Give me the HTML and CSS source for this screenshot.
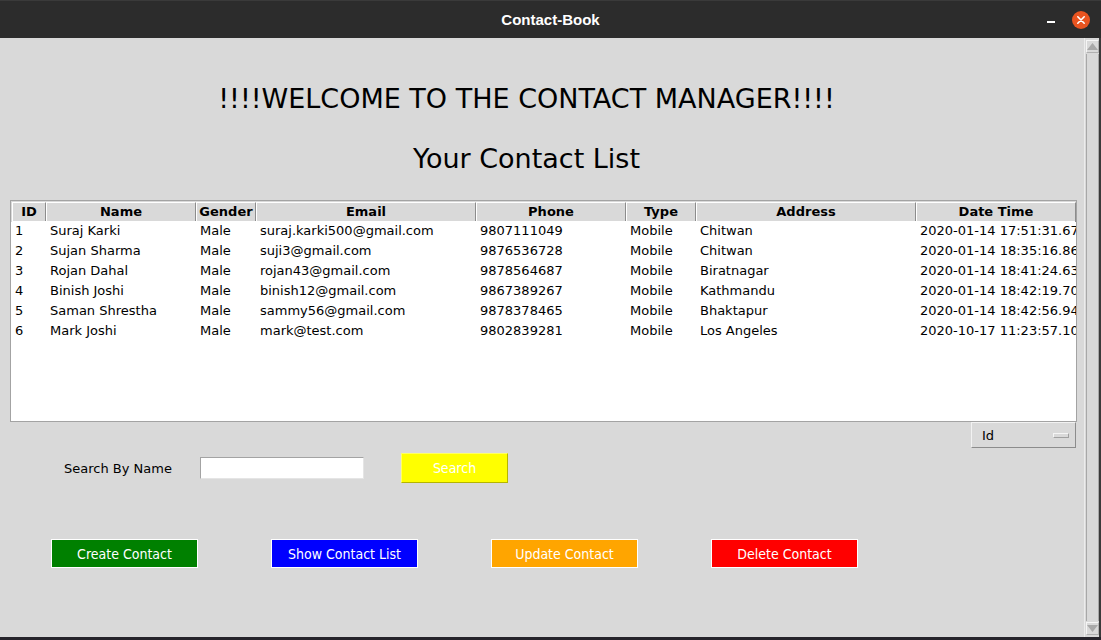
FILE: index.html
```html
<!DOCTYPE html>
<html>
<head>
<meta charset="utf-8">
<link rel="stylesheet" href="styles.css">
</head>
<body>
<div class="titlebar">
  <div class="tb-side"></div>
  <div class="tb-title">Contact-Book</div>
  <div class="tb-side tb-controls">
    <span class="tb-min"></span>
    <span class="tb-close"><svg width="18" height="18" viewBox="0 0 18 18"><circle cx="9" cy="9" r="9" fill="#e95420"/><path d="M5.8 5.8 L12.2 12.2 M12.2 5.8 L5.8 12.2" stroke="#fff" stroke-width="1.6" stroke-linecap="round"/></svg></span>
  </div>
</div>
<div class="window">
  <div class="content">
    <div class="headings">
      <h1 class="welcome">!!!!WELCOME TO THE CONTACT MANAGER!!!!</h1>
      <h2 class="subtitle">Your Contact List</h2>
    </div>
    <div class="tree">
      <div class="row head">
        <div class="c c-id">ID</div><div class="c c-name">Name</div><div class="c c-gender">Gender</div><div class="c c-email">Email</div><div class="c c-phone">Phone</div><div class="c c-type">Type</div><div class="c c-addr">Address</div><div class="c c-date">Date Time</div>
      </div>
      <div class="body">
        <div class="row"><div class="c">1</div><div class="c">Suraj Karki</div><div class="c">Male</div><div class="c">suraj.karki500@gmail.com</div><div class="c">9807111049</div><div class="c">Mobile</div><div class="c">Chitwan</div><div class="c">2020-01-14 17:51:31.677</div></div>
        <div class="row"><div class="c">2</div><div class="c">Sujan Sharma</div><div class="c">Male</div><div class="c">suji3@gmail.com</div><div class="c">9876536728</div><div class="c">Mobile</div><div class="c">Chitwan</div><div class="c">2020-01-14 18:35:16.865</div></div>
        <div class="row"><div class="c">3</div><div class="c">Rojan Dahal</div><div class="c">Male</div><div class="c">rojan43@gmail.com</div><div class="c">9878564687</div><div class="c">Mobile</div><div class="c">Biratnagar</div><div class="c">2020-01-14 18:41:24.634</div></div>
        <div class="row"><div class="c">4</div><div class="c">Binish Joshi</div><div class="c">Male</div><div class="c">binish12@gmail.com</div><div class="c">9867389267</div><div class="c">Mobile</div><div class="c">Kathmandu</div><div class="c">2020-01-14 18:42:19.701</div></div>
        <div class="row"><div class="c">5</div><div class="c">Saman Shrestha</div><div class="c">Male</div><div class="c">sammy56@gmail.com</div><div class="c">9878378465</div><div class="c">Mobile</div><div class="c">Bhaktapur</div><div class="c">2020-01-14 18:42:56.945</div></div>
        <div class="row"><div class="c">6</div><div class="c">Mark Joshi</div><div class="c">Male</div><div class="c">mark@test.com</div><div class="c">9802839281</div><div class="c">Mobile</div><div class="c">Los Angeles</div><div class="c">2020-10-17 11:23:57.102</div></div>
      </div>
    </div>
    <div class="combo-row">
      <div class="combo"><span>Id</span><span class="combo-ind"></span></div>
    </div>
    <div class="search-row">
      <span class="search-label">Search By Name</span>
      <input class="search-input" type="text">
      <button class="btn btn-search">Search</button>
    </div>
    <div class="actions">
      <button class="btn btn-create">Create Contact</button>
      <button class="btn btn-show">Show Contact List</button>
      <button class="btn btn-update">Update Contact</button>
      <button class="btn btn-delete">Delete Contact</button>
    </div>
  </div>
  <div class="scrollbar">
    <div class="sb-btn"><svg width="11" height="7" viewBox="0 0 11 7"><path d="M5.5 0 L11 7 L0 7 Z" fill="#a8a8a8"/></svg></div>
    <div class="sb-trough"></div>
    <div class="sb-btn"><svg width="11" height="7" viewBox="0 0 11 7"><path d="M0 0 L11 0 L5.5 7 Z" fill="#a8a8a8"/></svg></div>
  </div>
</div>
<div class="desktop"></div>
</body>
</html>
```
FILE: styles.css
```css
html, body {
  margin: 0;
  padding: 0;
  width: 1101px;
  height: 640px;
  overflow: hidden;
  background: #1f1f23;
  font-family: "DejaVu Sans", sans-serif;
}

.titlebar {
  height: 38px;
  background: #2c2c2c;
  display: flex;
  align-items: center;
  box-sizing: border-box;
  border-top: 1px solid #3a3a3a;
}
.tb-side {
  width: 120px;
  height: 100%;
}
.tb-title {
  flex: 1;
  text-align: center;
  color: #ffffff;
  font-family: "Liberation Sans", sans-serif;
  font-weight: bold;
  font-size: 15px;
}
.tb-controls {
  display: flex;
  align-items: center;
  justify-content: flex-end;
  gap: 17px;
  padding-right: 11px;
  box-sizing: border-box;
}
.tb-min {
  width: 8px;
  height: 2px;
  background: #ffffff;
  margin-top: 4px;
}
.tb-close {
  width: 18px;
  height: 18px;
  display: flex;
}

.window {
  height: 599px;
  background: #d9d9d9;
  display: flex;
}
.content {
  width: 1084px;
  display: flex;
  flex-direction: column;
}

.headings {
  width: 1053px;
  text-align: center;
}
.welcome {
  margin: 46px 0 0 0;
  font-size: 27px;
  font-weight: normal;
  line-height: 30px;
  color: #000;
}
.subtitle {
  margin: 30px 0 0 0;
  font-size: 27px;
  font-weight: normal;
  line-height: 30px;
  color: #000;
}

.tree {
  margin: 26px 0 0 10px;
  width: 1067px;
  height: 222px;
  box-sizing: border-box;
  border: 1px solid #a3a3a3;
  padding: 0 1px;
  background: #ffffff;
  display: flex;
  flex-direction: column;
  overflow: hidden;
}
.row {
  display: grid;
  grid-template-columns: 34px 150px 60px 220px 150px 70px 220px 160px;
  height: 20px;
  font-size: 13px;
  line-height: 20px;
  color: #000;
}
.row .c {
  padding-left: 4px;
  white-space: nowrap;
  overflow: hidden;
}
.row .c:first-child {
  padding-left: 3px;
}
.row.head {
  height: 20px;
  background: #d9d9d9;
  margin: 0 -1px;
  padding: 0 1px;
  border-top: 1px solid #d9d9d9;
}
.row.head .c {
  padding: 0;
  text-align: center;
  font-weight: bold;
  box-sizing: border-box;
  border-top: 1px solid #ffffff;
  border-left: 1px solid #ffffff;
  border-right: 1px solid #8c8c8c;
  border-bottom: 1px solid #8c8c8c;
  line-height: 18px;
}
.body {
  flex: 1;
  background: #ffffff;
  margin-top: -1px;
}

.combo-row {
  display: flex;
  justify-content: flex-end;
  padding-right: 8px;
}
.combo {
  width: 105px;
  height: 26px;
  box-sizing: border-box;
  border-top: 1px solid #f2f2f2;
  border-left: 1px solid #f2f2f2;
  border-right: 1px solid #8c8c8c;
  border-bottom: 1px solid #8c8c8c;
  display: flex;
  align-items: center;
  justify-content: space-between;
  padding: 0 6px 0 10px;
  font-size: 13px;
  color: #000;
}
.combo-ind {
  width: 14px;
  height: 3px;
  border: 1px solid #a0a0a0;
  border-top-color: #f5f5f5;
  border-left-color: #f5f5f5;
  background: #d9d9d9;
}

.search-row {
  display: flex;
  align-items: center;
  margin-top: 5px;
  height: 30px;
  padding-left: 64px;
}
.search-label {
  font-size: 13px;
  color: #000;
  width: 136px;
}
.search-input {
  width: 164px;
  height: 22px;
  box-sizing: border-box;
  border: 1px solid #a3a3a3;
  border-bottom-color: #e5e5e5;
  border-right-color: #e5e5e5;
  background: #fff;
  margin: 0;
  padding: 0;
}
.btn {
  font-family: "DejaVu Sans Condensed", "DejaVu Sans", sans-serif;
  font-stretch: condensed;
  font-size: 14px;
  color: #ffffff;
  box-sizing: border-box;
  margin: 0;
  padding: 0;
  cursor: pointer;
}
.btn-search {
  margin-left: 37px;
  width: 107px;
  height: 30px;
  background: #ffff00;
  border: 1px solid #b5b500;
  border-top-color: #ffff66;
  border-left-color: #ffff66;
}

.actions {
  display: flex;
  gap: 73px;
  margin-top: 56px;
  padding-left: 51px;
}
.actions .btn {
  width: 147px;
  height: 29px;
  border: 1px solid;
}
.btn-create {
  background: #008000;
  border-color: #33a033 #005a00 #005a00 #33a033;
}
.btn-show {
  background: #0000ff;
  border-color: #6666ff #0000b0 #0000b0 #6666ff;
}
.btn-update {
  background: #ffa500;
  border-color: #ffc14d #b37400 #b37400 #ffc14d;
}
.btn-delete {
  background: #ff0000;
  border-color: #ff6666 #b30000 #b30000 #ff6666;
}

.scrollbar {
  width: 17px;
  box-sizing: border-box;
  border-left: 1px solid #ececec;
  border-right: 2px solid #3a3a3a;
  display: flex;
  flex-direction: column;
  padding: 2px 0 2px 1px;
  background: #d9d9d9;
}
.sb-btn {
  height: 11px;
  display: flex;
  align-items: center;
  justify-content: center;
  border: 1px solid #b0b0b0;
  border-top-color: #f5f5f5;
  border-left-color: #f5f5f5;
}
.sb-trough {
  flex: 1;
  border-left: 1px solid #a8a8a8;
  border-right: 1px solid #a8a8a8;
  margin: 1px 0;
}

.desktop {
  height: 3px;
  background: #26242b;
}
```
